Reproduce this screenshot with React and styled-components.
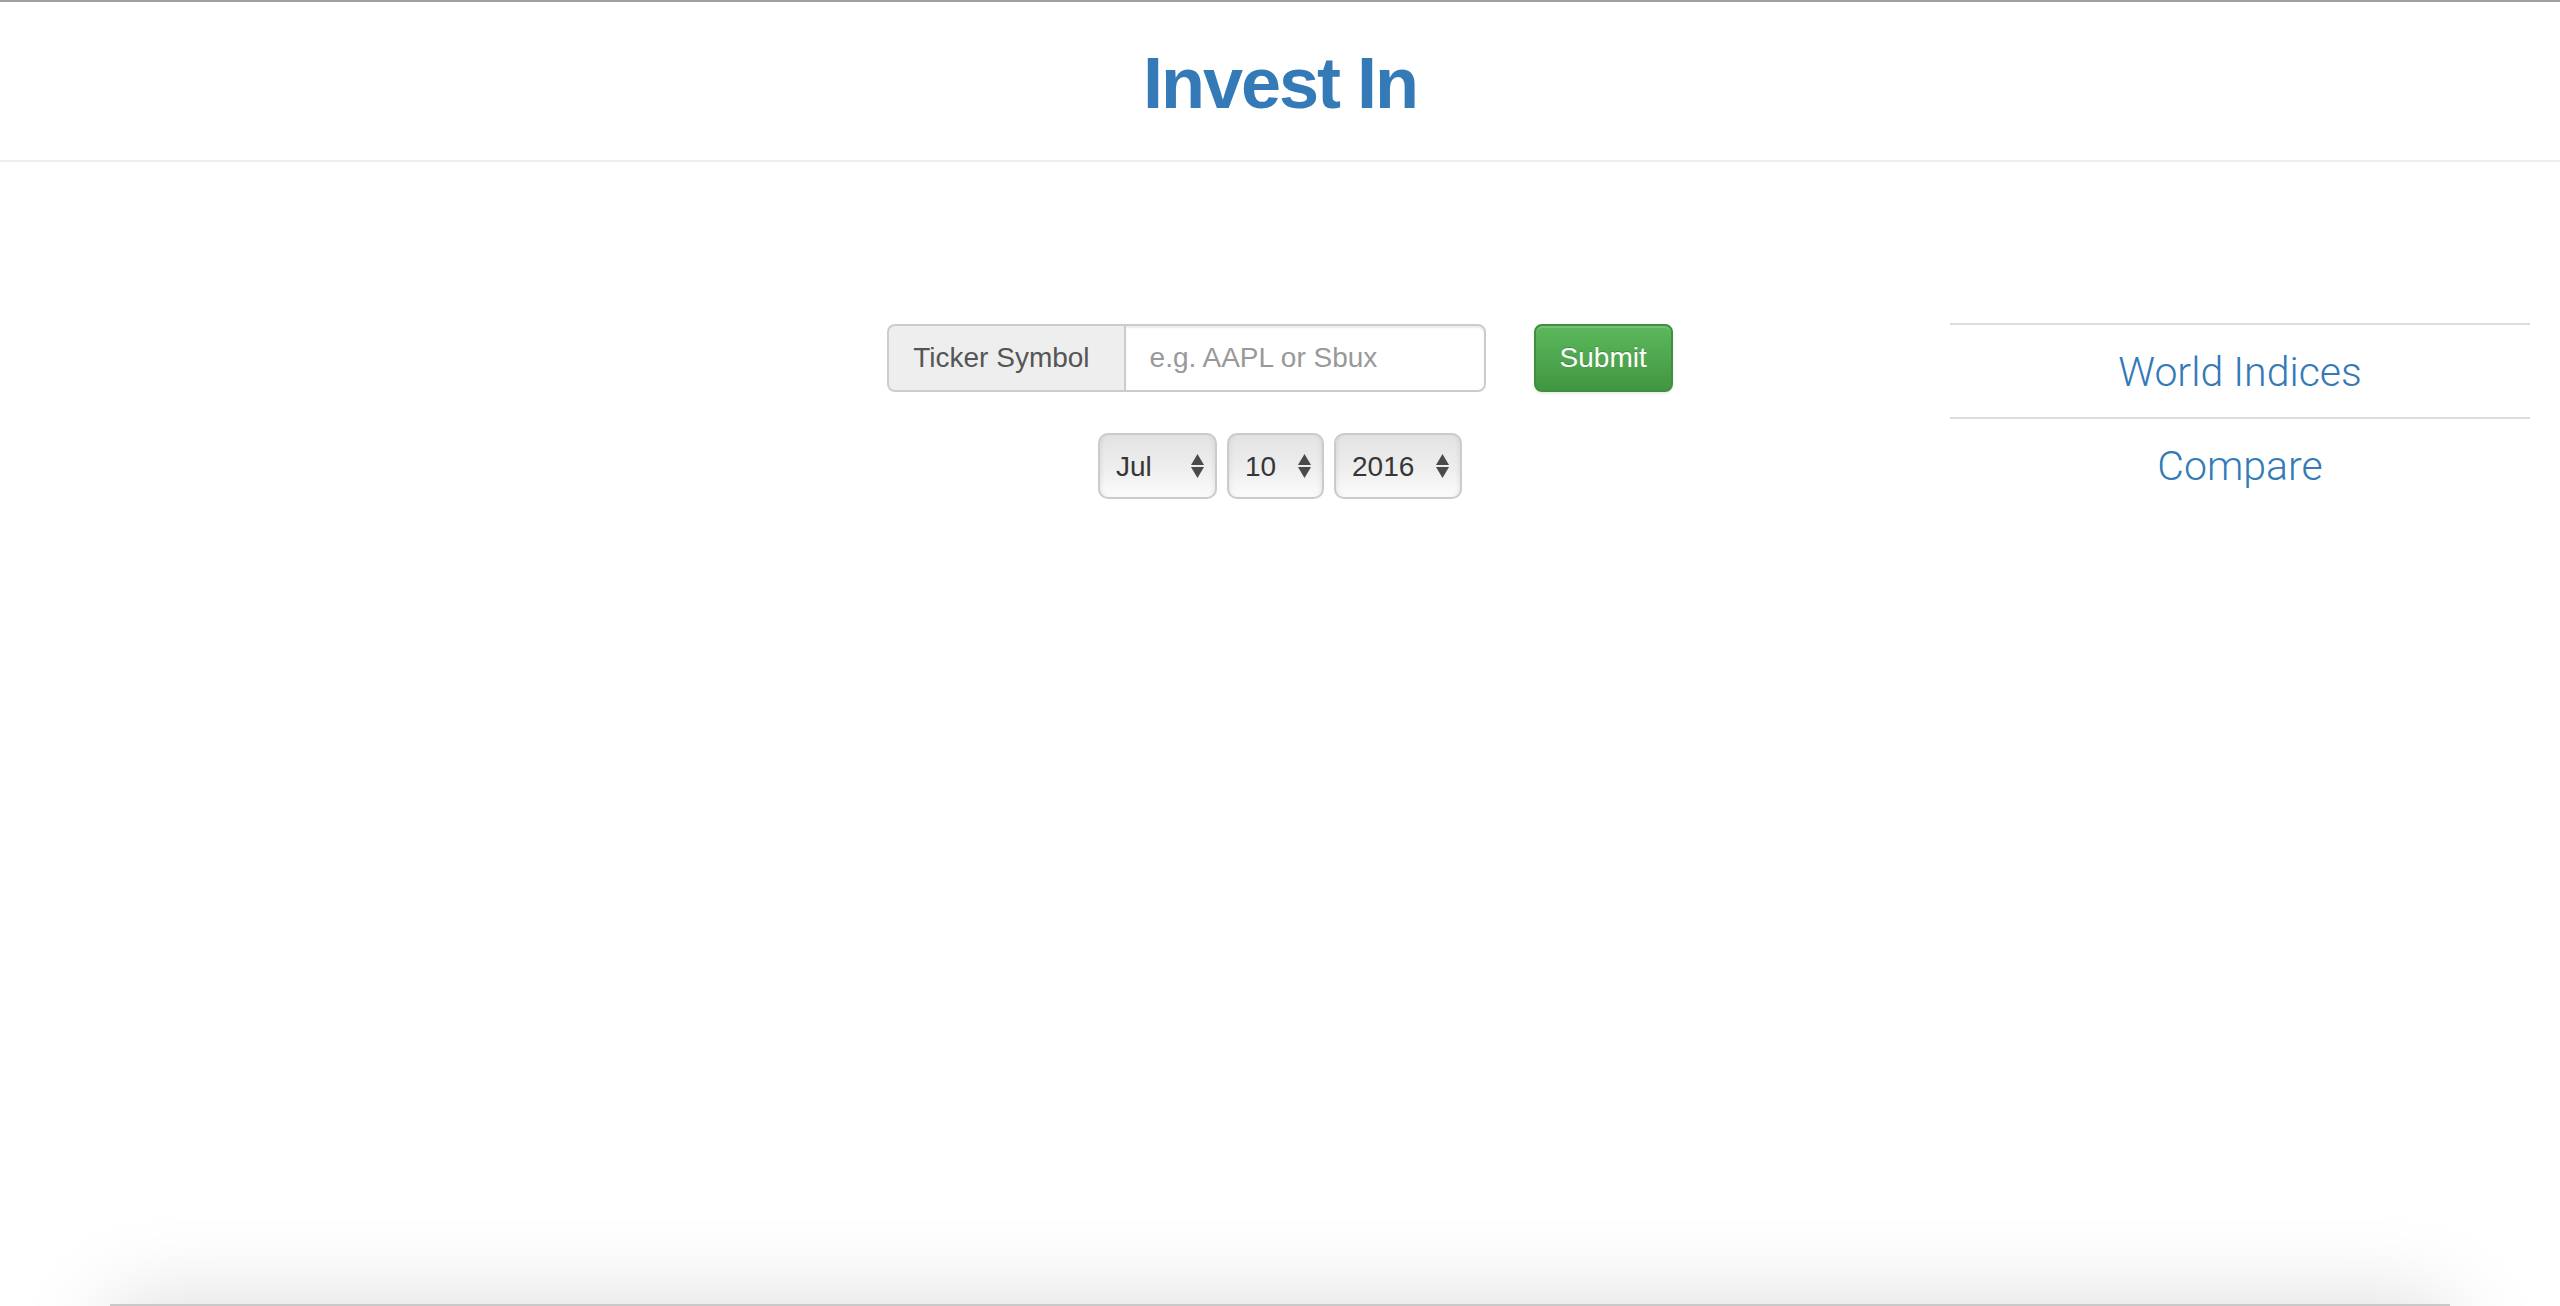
import React from 'react';
import styled, { createGlobalStyle } from 'styled-components';

const GlobalStyle = createGlobalStyle`
  html, body {
    margin: 0;
    padding: 0;
    background: #fff;
    overflow: hidden;
  }
  body {
    font-family: "Liberation Sans", Arial, sans-serif;
    color: #333;
  }
`;

const Page = styled.div`
  height: 100vh;
  box-sizing: border-box;
  border-top: 2px solid #a0a0a0;
  display: flex;
  flex-direction: column;
  overflow: hidden;
`;

const Header = styled.header`
  padding: 41px 0 37px;
  border-bottom: 2px solid #eee;
  text-align: center;
`;

const Title = styled.h1`
  margin: 0;
  font-size: 72px;
  line-height: 80px;
  font-weight: bold;
  letter-spacing: -2px;
  color: #337ab7;
`;

const Main = styled.main`
  display: grid;
  grid-template-columns: repeat(4, 1fr);
  padding-top: 161px;
`;

const FormColumn = styled.section`
  grid-column: 2 / span 2;
  padding: 0 30px;
  display: flex;
  flex-direction: column;
  align-items: center;
`;

const SearchRow = styled.form`
  margin-top: 1px;
  display: flex;
  align-items: center;
  gap: 48px;
`;

const InputGroup = styled.div`
  display: flex;
  height: 68px;
`;

const Addon = styled.span`
  display: flex;
  align-items: center;
  box-sizing: border-box;
  padding: 0 34px 0 24px;
  background: #eee;
  border: 2px solid #ccc;
  border-right: 0;
  border-radius: 8px 0 0 8px;
  font-size: 28px;
  color: #555;
  white-space: nowrap;
`;

const TextInput = styled.input`
  box-sizing: border-box;
  width: 362px;
  height: 68px;
  padding: 0 24px;
  border: 2px solid #ccc;
  border-radius: 0 8px 8px 0;
  font-family: "Liberation Sans", Arial, sans-serif;
  font-size: 28px;
  color: #555;
  outline: none;
  box-shadow: inset 0 2px 2px rgba(0, 0, 0, 0.075);

  &::placeholder {
    color: #999;
  }
`;

const SubmitButton = styled.button`
  box-sizing: border-box;
  height: 68px;
  padding: 0 24px;
  border: 2px solid #3e8f3e;
  border-radius: 8px;
  background-image: linear-gradient(to bottom, #5cb85c 0%, #419641 100%);
  color: #fff;
  font-family: "Liberation Sans", Arial, sans-serif;
  font-size: 28px;
  text-shadow: 0 -1px 0 rgba(0, 0, 0, 0.2);
  box-shadow: inset 0 2px 0 rgba(255, 255, 255, 0.15), 0 2px 2px rgba(0, 0, 0, 0.075);
  cursor: pointer;
`;

const DateRow = styled.div`
  margin-top: 41px;
  display: flex;
  gap: 10px;
`;

const SelectWrap = styled.div`
  position: relative;
  width: ${(p) => p.$w}px;
  height: 66px;
`;

const Select = styled.select`
  appearance: none;
  -webkit-appearance: none;
  box-sizing: border-box;
  width: 100%;
  height: 100%;
  padding: 0 0 0 16px;
  border: 2px solid #cbcbcb;
  border-radius: 10px;
  background: linear-gradient(to bottom, #e3e3e3 0%, #eeeeee 55%, #fbfbfb 100%);
  box-shadow: inset 4px 0 5px -3px rgba(0, 0, 0, 0.08), inset -4px 0 5px -3px rgba(0, 0, 0, 0.08);
  font-family: "Liberation Sans", Arial, sans-serif;
  font-size: 28px;
  color: #363636;
  outline: none;
`;

const Arrows = styled.svg`
  position: absolute;
  right: 13px;
  top: 21px;
  pointer-events: none;
`;

const SideNav = styled.nav`
  padding: 0 30px;
  display: flex;
  flex-direction: column;
`;

const NavLink = styled.a`
  display: block;
  border-top: 2px solid #ddd;
  padding: 17px 0 15px;
  text-align: center;
  font-family: Roboto, "Liberation Sans", sans-serif;
  font-weight: 300;
  font-size: 41px;
  line-height: 60px;
  color: #337ab7;
  text-decoration: none;
`;

const Footer = styled.footer`
  margin-top: auto;
  margin-bottom: -198px;
  align-self: center;
  flex-shrink: 0;
  width: 2340px;
  height: 200px;
  background: #c9c9c9;
  box-shadow: 0 0 90px rgba(0, 0, 0, 0.15);
`;

const months = ['Jan', 'Feb', 'Mar', 'Apr', 'May', 'Jun', 'Jul', 'Aug', 'Sep', 'Oct', 'Nov', 'Dec'];
const days = Array.from({ length: 31 }, (_, i) => String(i + 1));
const years = Array.from({ length: 20 }, (_, i) => String(2016 - i));

function DateSelect({ width, options, value }) {
  return (
    <SelectWrap $w={width}>
      <Select defaultValue={value}>
        {options.map((o) => (
          <option key={o} value={o}>{o}</option>
        ))}
      </Select>
      <Arrows width="13" height="24" viewBox="0 0 13 24">
        <polygon points="0,11 6.5,0 13,11" fill="#4a4a4a" />
        <polygon points="0,13 13,13 6.5,24" fill="#4a4a4a" />
      </Arrows>
    </SelectWrap>
  );
}

export default function App() {
  return (
    <>
      <GlobalStyle />
      <Page>
        <Header>
          <Title>Invest In</Title>
        </Header>
        <Main>
          <FormColumn>
            <SearchRow onSubmit={(e) => e.preventDefault()}>
              <InputGroup>
                <Addon>Ticker Symbol</Addon>
                <TextInput placeholder="e.g. AAPL or Sbux" />
              </InputGroup>
              <SubmitButton type="submit">Submit</SubmitButton>
            </SearchRow>
            <DateRow>
              <DateSelect width={119} options={months} value="Jul" />
              <DateSelect width={97} options={days} value="10" />
              <DateSelect width={128} options={years} value="2016" />
            </DateRow>
          </FormColumn>
          <SideNav>
            <NavLink href="#">World Indices</NavLink>
            <NavLink href="#">Compare</NavLink>
          </SideNav>
        </Main>
        <Footer />
      </Page>
    </>
  );
}
